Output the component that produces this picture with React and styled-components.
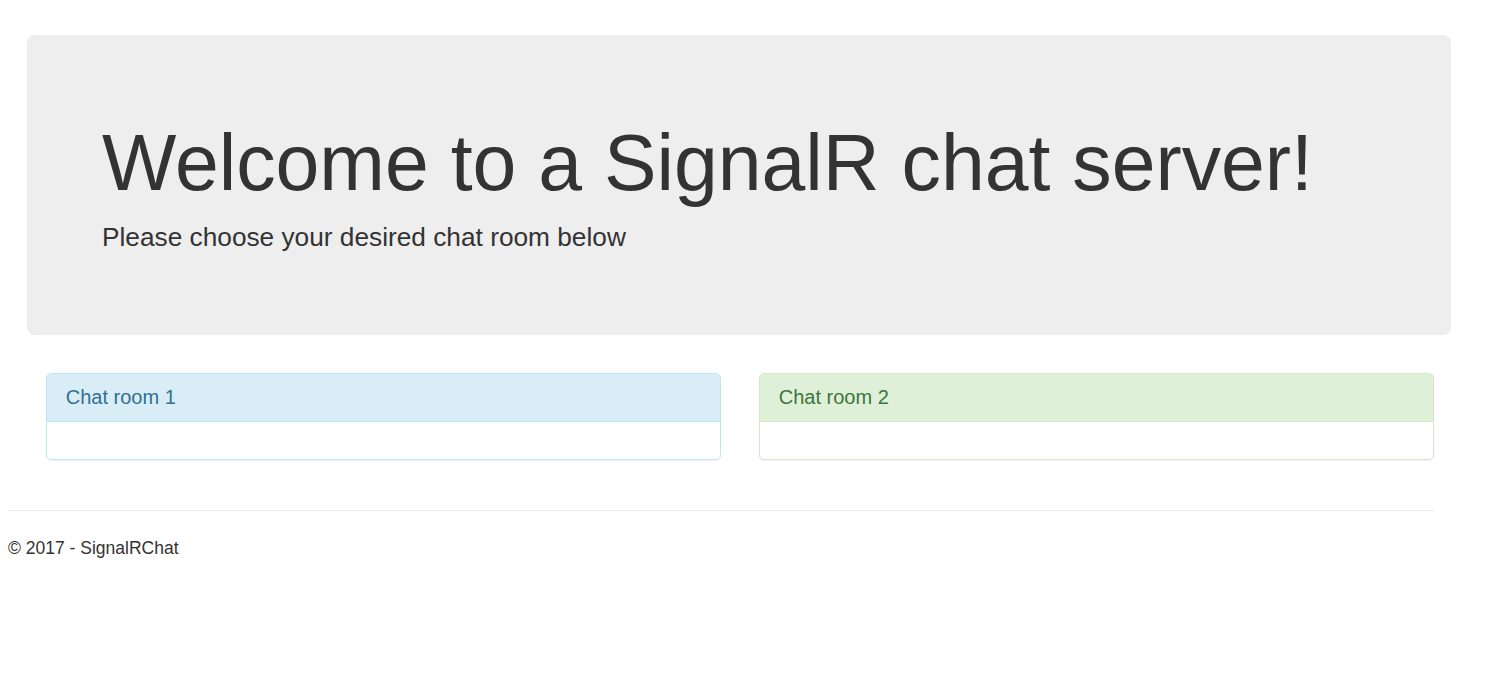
import * as React from "react";
import styled, { createGlobalStyle } from "styled-components";

const GlobalStyle = createGlobalStyle`
  html, body {
    margin: 0;
    padding: 0;
    background: #fff;
  }
  body {
    font-family: "Liberation Sans", Arial, Helvetica, sans-serif;
    font-size: 17.5px;
    line-height: 1.42857;
    color: #333;
  }
`;

const Page = styled.div`
  padding: 35px 0 0 8px;
`;

const Main = styled.div`
  margin-left: 19px;
  width: 1424px;
`;

const Jumbotron = styled.div`
  background: #eee;
  border-radius: 7.5px;
  padding: 60px 75px;
  margin-bottom: 38px;
`;

const Title = styled.h1`
  margin: 25px 0 12.5px;
  font-size: 78.75px;
  line-height: 1.1;
  font-weight: 500;
  color: #333;
`;

const Lead = styled.p`
  margin: 0 0 18.75px;
  font-size: 26.25px;
  line-height: 1.42857;
  font-weight: 200;
`;

const Row = styled.div`
  display: grid;
  grid-template-columns: 675px 675px;
  column-gap: 38px;
  padding-left: 19px;
`;

const tones = {
  info: { bg: "#d9edf7", color: "#31708f", border: "#bce8f1" },
  success: { bg: "#dff0d8", color: "#3c763d", border: "#d6e9c6" },
};

const Panel = styled.div`
  border: 1px solid ${(p) => tones[p.$tone].border};
  border-radius: 5px;
  background: #fff;
  box-shadow: 0 1px 1px rgba(0, 0, 0, 0.05);
  margin-bottom: 25px;
`;

const PanelHeading = styled.div`
  padding: 12px 18.75px 13px;
  background: ${(p) => tones[p.$tone].bg};
  color: ${(p) => tones[p.$tone].color};
  border-bottom: 1px solid ${(p) => tones[p.$tone].border};
  border-radius: 4px 4px 0 0;
`;

const PanelTitle = styled.h3`
  margin: 0;
  font-size: 20px;
  line-height: 1.1;
  font-weight: 400;
  color: inherit;
`;

const PanelBody = styled.div`
  padding: 18.5px;
`;

const Rule = styled.hr`
  width: 1426px;
  margin: 25px 0;
  border: 0;
  border-top: 1px solid #eee;
`;

const Footer = styled.footer`
  p {
    margin: 0;
  }
`;

export default function App() {
  const rooms = [
    { name: "Chat room 1", tone: "info" },
    { name: "Chat room 2", tone: "success" },
  ];
  return (
    <Page>
      <GlobalStyle />
      <Main>
        <Jumbotron>
          <Title>Welcome to a SignalR chat server!</Title>
          <Lead>Please choose your desired chat room below</Lead>
        </Jumbotron>
        <Row>
          {rooms.map((r) => (
            <Panel key={r.name} $tone={r.tone}>
              <PanelHeading $tone={r.tone}>
                <PanelTitle>{r.name}</PanelTitle>
              </PanelHeading>
              <PanelBody />
            </Panel>
          ))}
        </Row>
      </Main>
      <Rule />
      <Footer>
        <p>© 2017 - SignalRChat</p>
      </Footer>
    </Page>
  );
}
